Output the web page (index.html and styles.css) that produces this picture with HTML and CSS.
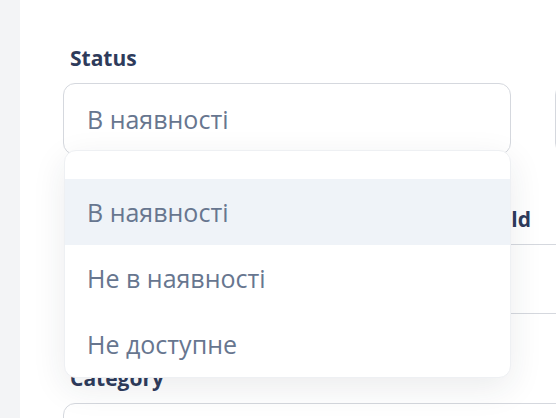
FILE: index.html
```html
<!DOCTYPE html>
<html lang="uk">
<head>
<meta charset="utf-8">
<title>Status</title>
<link rel="stylesheet" href="styles.css">
</head>
<body>
<div class="app">
  <aside class="sidebar"></aside>
  <main class="content">
    <div class="form-grid">
      <div class="field">
        <label class="label">Status</label>
        <div class="select-wrap">
          <div class="select">В наявності</div>
          <ul class="dropdown">
            <li class="option active">В наявності</li>
            <li class="option">Не в наявності</li>
            <li class="option">Не доступне</li>
          </ul>
        </div>
      </div>
      <div class="field">
        <label class="label">Price</label>
        <div class="input"></div>
      </div>
      <div class="field wide offset">
        <label class="label">Discount field</label>
        <div class="input input-text"></div>
      </div>
      <div class="field wide">
        <label class="label">Category</label>
        <div class="input input-text"></div>
      </div>
    </div>
  </main>
</div>
</body>
</html>
```
FILE: styles.css
```css
* { box-sizing: border-box; }
html, body { margin: 0; padding: 0; }
body {
  font-family: "Open Sans", "Noto Sans", sans-serif;
  background: #ffffff;
  overflow: hidden;
  width: 556px;
  height: 418px;
}
.app {
  display: flex;
  height: 418px;
  overflow: hidden;
}
.sidebar {
  flex: 0 0 20px;
  background: #f3f4f6;
}
.content {
  flex: 1 1 auto;
  background: #ffffff;
  padding: 44px 0 0 43px;
  overflow: hidden;
}
.form-grid {
  display: grid;
  grid-template-columns: 448px 448px;
  column-gap: 44px;
  row-gap: 50px;
  width: 940px;
}
.field {
  display: flex;
  flex-direction: column;
  gap: 11px;
}
.field.wide { grid-column: 1 / span 2; }
.field.offset { margin-left: 316px; }
.label {
  display: block;
  font-size: 21px;
  line-height: 28px;
  font-weight: 700;
  color: #2e3b5b;
  padding-left: 7px;
  white-space: nowrap;
}
.select-wrap { position: relative; }
.select {
  height: 72px;
  border: 1px solid #d5d8de;
  border-radius: 12px;
  padding: 0 23px;
  display: flex;
  align-items: center;
  font-size: 25px;
  color: #67768f;
  background: #fff;
}
.input {
  height: 72px;
  border: 1px solid #d5d8de;
  border-radius: 12px;
  background: #fff;
}
.input-text { height: 70px; }
.dropdown {
  position: absolute;
  top: 67px;
  left: 1px;
  width: 447px;
  margin: 0;
  padding: 28px 0 0;
  list-style: none;
  background: #fff;
  border: 1px solid #eef0f3;
  border-radius: 12px;
  box-shadow: 0 10px 34px rgba(30, 40, 60, 0.09);
  overflow: hidden;
  z-index: 10;
}
.option {
  height: 66px;
  display: flex;
  align-items: center;
  padding: 0 22px;
  font-size: 25px;
  color: #67768f;
}
.option.active { background: #eff3f8; }
```
